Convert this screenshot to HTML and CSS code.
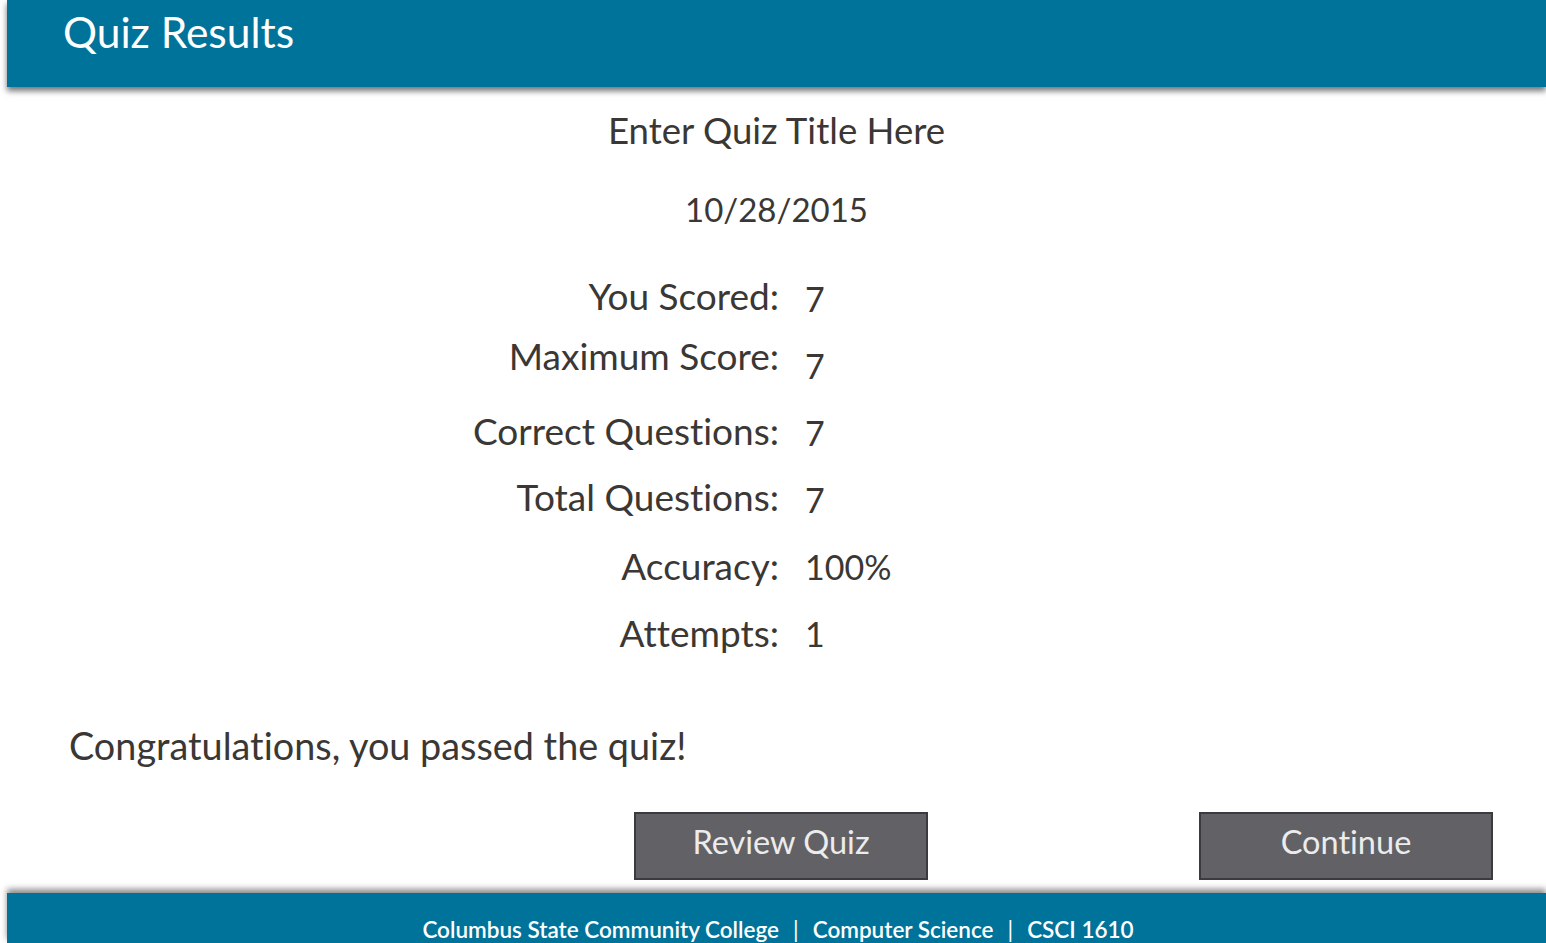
FILE: index.html
```html
<!DOCTYPE html>
<html lang="en">
<head>
<meta charset="utf-8">
<title>Quiz Results</title>
<link rel="stylesheet" href="styles.css">
</head>
<body>
<div class="page">
  <header class="topbar">
    <h1 class="topbar-title">Quiz Results</h1>
  </header>
  <main class="content">
    <h2 class="quiz-title">Enter Quiz Title Here</h2>
    <p class="quiz-date">10/28/2015</p>
    <div class="stats">
      <div class="stat-labels">
        <div class="stat-label r1">You Scored:</div>
        <div class="stat-label r2">Maximum Score:</div>
        <div class="stat-label r3">Correct Questions:</div>
        <div class="stat-label r4">Total Questions:</div>
        <div class="stat-label r5">Accuracy:</div>
        <div class="stat-label r6">Attempts:</div>
      </div>
      <div class="stat-values">
        <div class="stat-value">7</div>
        <div class="stat-value">7</div>
        <div class="stat-value">7</div>
        <div class="stat-value">7</div>
        <div class="stat-value">100%</div>
        <div class="stat-value">1</div>
      </div>
    </div>
    <p class="message">Congratulations, you passed the quiz!</p>
    <div class="actions">
      <button class="btn" type="button">Review Quiz</button>
      <button class="btn" type="button">Continue</button>
    </div>
  </main>
  <footer class="footbar">
    <span>Columbus State Community College</span><span class="sep">|</span><span>Computer Science</span><span class="sep">|</span><span>CSCI 1610</span>
  </footer>
</div>
</body>
</html>
```

FILE: styles.css
```css
* { box-sizing: border-box; }
html, body { margin: 0; padding: 0; height: 100%; }
body {
  background: #ffffff;
  font-family: "Lato", "Open Sans", "Liberation Sans", sans-serif;
  font-variant-ligatures: none;
  color: #3a3734;
  overflow: hidden;
}
.page {
  margin-left: 7px;
  height: 943px;
  display: flex;
  flex-direction: column;
}
.topbar {
  height: 87px;
  flex: 0 0 87px;
  background: #00739a;
  box-shadow: 0 4px 6px rgba(0, 0, 0, 0.55);
  padding-left: 56px;
  position: relative;
  z-index: 1;
}
.topbar-title {
  margin: 0;
  font-weight: 400;
  font-size: 42.5px;
  line-height: 64px;
  color: #ffffff;
}
.content {
  flex: 1;
  display: flex;
  flex-direction: column;
}
.quiz-title {
  margin: 21px 0 0;
  text-align: center;
  font-weight: 400;
  font-size: 36.6px;
  line-height: 44px;
}
.quiz-date {
  margin: 35px 0 0;
  text-align: center;
  font-size: 33px;
  line-height: 44px;
}
.stats {
  margin: 43px 0 0;
  display: flex;
  gap: 26px;
}
.stat-labels {
  width: 772px;
  display: flex;
  flex-direction: column;
}
.stat-label {
  text-align: right;
  font-size: 37px;
  line-height: 44px;
}
.r1 { height: 60px; }
.r2 { height: 75px; }
.r3 { height: 66px; }
.r4 { height: 69px; }
.r5 { height: 67px; }
.r6 { height: 67px; }
.stat-values {
  display: flex;
  flex-direction: column;
  padding-top: 3px;
}
.stat-value {
  height: 67px;
  font-size: 34px;
  line-height: 44px;
}
.message {
  margin: 45px 0 0 62px;
  font-size: 37.8px;
  line-height: 44px;
}
.actions {
  margin-top: 44px;
  display: flex;
  gap: 271px;
  padding-left: 627px;
}
.btn {
  width: 294px;
  height: 68px;
  background: #626266;
  border: 2px solid #3b3b3e;
  color: #ececec;
  font-family: inherit;
  font-variant-ligatures: none;
  font-size: 32.5px;
  padding: 0 0 9px;
}
.footbar {
  margin-top: auto;
  height: 50px;
  flex: 0 0 50px;
  background: #00739a;
  box-shadow: 0 -4px 6px rgba(0, 0, 0, 0.45);
  color: #ffffff;
  font-weight: 600;
  font-size: 22.5px;
  display: flex;
  justify-content: center;
  align-items: flex-end;
  line-height: 26px;
  padding-left: 3px;
}
.sep {
  font-weight: 400;
  margin: 0 14px;
}
```
